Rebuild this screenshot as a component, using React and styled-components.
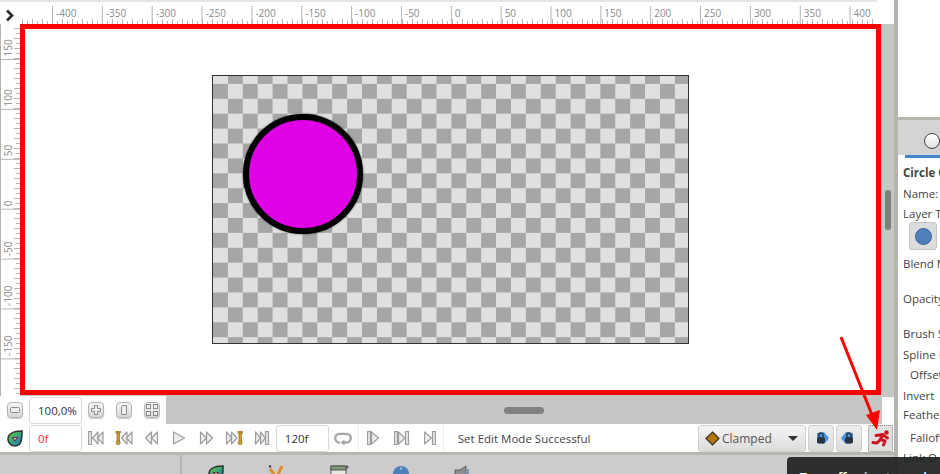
import React from "react";
import styled, { createGlobalStyle } from "styled-components";

const GlobalStyle = createGlobalStyle`
  html, body {
    margin: 0;
    padding: 0;
    overflow: hidden;
    background: #c6c7c5;
  }
`;

const Page = styled.div`
  position: relative;
  display: flex;
  width: 940px;
  height: 474px;
  overflow: hidden;
  font-family: "Open Sans", "Liberation Sans", sans-serif;
  font-size: 11.5px;
  color: #444;
`;
const Workspace = styled.div`
  display: flex;
  flex-direction: column;
  width: 894px;
  flex-shrink: 0;
  border-right: 4px solid #b4b5af;
`;
const RulerBar = styled.div`
  display: flex;
  height: 24px;
  background: #fff;
`;
const Corner = styled.div`
  width: 20px;
  height: 24px;
  flex-shrink: 0;
  border-top: 2px solid #e4e4e4;
  box-sizing: border-box;
`;
const RulerSvg = styled.svg`
  display: block;
  flex-shrink: 0;
  background: #fff;
`;
const MiddleRow = styled.div`
  display: flex;
  height: 372px;
`;
const CanvasFrame = styled.div`
  display: flex;
  align-items: center;
  justify-content: center;
  box-sizing: border-box;
  width: 861px;
  height: 371px;
  border: 5px solid #ff0000;
  background: #fff;
`;
const Board = styled.div`
  position: relative;
  box-sizing: border-box;
  width: 477px;
  height: 269px;
  border: 1px solid #333;
  background: conic-gradient(#a6a6a6 25%, #e0e0e0 0 50%, #a6a6a6 0 75%, #e0e0e0 0);
  background-size: 29.8px 29.8px;
  background-position: 0 -7px;
`;
const Disc = styled.div`
  position: absolute;
  left: 30px;
  top: 38px;
  box-sizing: border-box;
  width: 120px;
  height: 120px;
  border: 6px solid #000;
  border-radius: 50%;
  background: #df00e6;
  box-shadow: 0 0 2px 0 rgba(0, 0, 0, 0.8);
`;
const ScrollTrack = styled.div`
  flex: 1;
  padding: 166px 0 0 4px;
`;
const ScrollThumb = styled.div`
  width: 6px;
  height: 40px;
  border-radius: 3px;
  background: #7e8080;
`;
const ZoomRow = styled.div`
  display: flex;
  height: 28px;
`;
const ZoomTools = styled.div`
  display: flex;
  align-items: center;
  width: 166px;
  flex-shrink: 0;
  padding-left: 7px;
  box-sizing: border-box;
  background: #fff;
`;
const HandleArea = styled.div`
  flex: 1;
  display: flex;
  align-items: center;
`;
const HThumb = styled.div`
  width: 40px;
  height: 7px;
  margin-left: 338px;
  border-radius: 4px;
  background: #808181;
`;
const CornerBox = styled.div`
  align-self: flex-end;
  width: 12px;
  height: 27px;
  margin-left: auto;
  background: #fff;
`;
const SmallButton = styled.div`
  display: flex;
  align-items: center;
  justify-content: center;
  box-sizing: border-box;
  width: 16px;
  height: 16px;
  margin-left: ${(p) => p.$before || 0}px;
  margin-right: ${(p) => p.$gap}px;
  border: 1px solid #b4b4b4;
  border-radius: 4px;
  background: linear-gradient(#f6f6f6, #d6d6d6);
  box-shadow: 0 1px 1px rgba(0, 0, 0, 0.2);
`;
const Field = styled.div`
  display: flex;
  align-items: center;
  box-sizing: border-box;
  width: 53px;
  height: 27px;
  padding-left: ${(p) => p.$pad}px;
  border: 1px solid #d8d8d8;
  border-radius: 3px;
  background: #fff;
  color: ${(p) => p.$color || "#333"};
  white-space: nowrap;
  overflow: hidden;
  flex-shrink: 0;
`;
const TransportRow = styled.div`
  display: flex;
  align-items: center;
  height: 28px;
  padding-left: 7px;
  background: #fff;
`;
const LeafSlot = styled.div`
  width: 22px;
  flex-shrink: 0;
  display: flex;
`;
const PlayerButton = styled.div`
  display: flex;
  align-items: center;
  justify-content: center;
  width: ${(p) => p.$w}px;
  height: 28px;
  flex-shrink: 0;
`;
const Divider = styled.div`
  width: 1px;
  height: 28px;
  background: #ececec;
  flex-shrink: 0;
`;
const Status = styled.div`
  flex: 1;
  padding-left: 14px;
  color: #444;
  white-space: nowrap;
`;
const Select = styled.div`
  display: flex;
  align-items: center;
  box-sizing: border-box;
  width: 108px;
  height: 27px;
  padding: 0 6px 0 6px;
  border: 1px solid #d0d0d0;
  border-radius: 3px;
  background: linear-gradient(#f5f5f5, #dcdcdc);
  font-size: 12px;
  color: #555;
  gap: 2px;
`;
const Caret = styled.div`
  margin-left: auto;
  margin-right: 1px;
  border-left: 5px solid transparent;
  border-right: 5px solid transparent;
  border-top: 5px solid #333;
`;
const LockButton = styled.div`
  display: flex;
  align-items: center;
  justify-content: center;
  box-sizing: border-box;
  width: 26px;
  height: 27px;
  margin-left: 2px;
  border: 1px solid #d0d0d0;
  border-radius: 3px;
  background: linear-gradient(#efefef, #dadada);
`;
const AnimateButton = styled.div`
  display: flex;
  align-items: center;
  justify-content: center;
  box-sizing: border-box;
  width: 25px;
  height: 27px;
  margin-left: 6px;
  margin-right: 1px;
  border: 1px dotted #888;
  border-radius: 2px;
  background: #e0e0e0;
`;
const Dock = styled.div`
  flex: 1;
  display: flex;
  overflow: hidden;
  border-top: 3px solid #b6b7b1;
  background: #cccccc;
`;
const DockLeft = styled.div`
  width: 180px;
  flex-shrink: 0;
  border-right: 2px solid #b6b7b1;
`;
const DockIcons = styled.div`
  display: flex;
  gap: 43px;
  padding: 10px 0 0 26px;
`;
const Panel = styled.div`
  flex: 1;
  min-width: 0;
  display: flex;
  flex-direction: column;
  background: #fff;
  overflow: hidden;
`;
const PanelTop = styled.div`
  height: 117px;
  flex-shrink: 0;
  background: #fff;
`;
const TabBand = styled.div`
  height: 38px;
  flex-shrink: 0;
  box-sizing: border-box;
  padding: 13px 0 0 26px;
  border-top: 3px solid #b6b7b1;
  background: #d4d4d3;
`;
const TabDot = styled.div`
  box-sizing: border-box;
  width: 16px;
  height: 16px;
  border: 1px solid #444;
  border-radius: 50%;
  background: linear-gradient(#fff, #e0e0e0);
`;
const TabLine = styled.div`
  height: 3px;
  margin-left: 7px;
  flex-shrink: 0;
  background: #3f86cc;
`;
const Params = styled.div`
  display: flex;
  flex-direction: column;
  padding-left: 5px;
`;
const Param = styled.div`
  height: ${(p) => p.$h}px;
  line-height: 20px;
  padding-top: ${(p) => p.$top || 0}px;
  padding-left: ${(p) => (p.$indent ? 7 : 0)}px;
  font-weight: ${(p) => (p.$bold ? 700 : 400)};
  color: #444;
  white-space: nowrap;
  flex-shrink: 0;
`;
const LayerButton = styled.div`
  display: flex;
  align-items: center;
  justify-content: center;
  box-sizing: border-box;
  width: 28px;
  height: 28px;
  margin: 0 0 4px 6px;
  border: 1px solid #c4c4c4;
  border-radius: 3px;
  background: #dcdcdc;
  flex-shrink: 0;
`;
const LayerDot = styled.div`
  width: 17px;
  height: 17px;
  border-radius: 50%;
  background: #4f7fbb;
  border: 1px solid #3a6396;
  box-sizing: border-box;
`;
const Tooltip = styled.div`
  position: absolute;
  left: 787px;
  top: 457px;
  width: 160px;
  height: 30px;
  padding: 13px 0 0 13px;
  border-radius: 4px 0 0 0;
  background: rgba(32, 34, 34, 0.93);
  color: #fff;
  font-size: 12px;
  font-weight: 600;
  line-height: 16px;
  white-space: nowrap;
`;
const Arrow = styled.svg`
  position: absolute;
  left: 830px;
  top: 330px;
`;

const topLabels = [-400, -350, -300, -250, -200, -150, -100, -50, 0, 50, 100, 150, 200, 250, 300, 350, 400];
const sideLabels = [150, 100, 50, 0, -50, -100, -150];

const TopRuler = () => {
  const ticks = [];
  for (let x = 2; x < 857; x += 5) {
    const tall = Math.round((x - 2) / 5) % 2 === 0;
    ticks.push(<line key={x} x1={x + 0.5} x2={x + 0.5} y1={tall ? 19 : 21} y2={24} stroke="#b5b5b5" />);
  }
  return (
    <RulerSvg width="857" height="24">
      <rect width="857" height="2" fill="#e4e4e4" />
      {ticks}
      {topLabels.map((v) => {
        const x = 32 + ((v + 400) / 50) * 49.85;
        return (
          <g key={v}>
            <line x1={x + 0.5} x2={x + 0.5} y1="6" y2="24" stroke="#b5b5b5" />
            <text x={x + 4} y="17" fontSize="10" fill="#8c8c8c" fontFamily="Open Sans, sans-serif">
              {v}
            </text>
          </g>
        );
      })}
    </RulerSvg>
  );
};

const SideRuler = () => {
  const ticks = [];
  for (let y = 4; y < 372; y += 5) {
    const tall = Math.round((y - 4) / 5) % 2 === 0;
    ticks.push(<line key={y} x1={tall ? 14 : 16} x2="20" y1={y + 0.5} y2={y + 0.5} stroke="#b5b5b5" />);
  }
  return (
    <RulerSvg width="20" height="372">
      <rect width="1" height="372" fill="#b4b5af" />
      {ticks}
      {sideLabels.map((v) => {
        const y = 35.5 + ((150 - v) / 50) * 49.9;
        return (
          <g key={v}>
            <line x1="0" x2="20" y1={y} y2={y} stroke="#b5b5b5" />
            <text
              transform={`translate(12 ${y - 3}) rotate(-90)`}
              fontSize="10"
              fill="#8c8c8c"
              fontFamily="Open Sans, sans-serif"
            >
              {v}
            </text>
          </g>
        );
      })}
    </RulerSvg>
  );
};

const Chevron = () => (
  <svg width="20" height="22">
    <path d="M7 8.5 L12 13.5 L7 18.5" fill="none" stroke="#2c2c2c" strokeWidth="2.6" />
  </svg>
);

const Leaf = ({ id = "leaf" }) => (
  <svg width="16" height="17" viewBox="0 0 16 17">
    <defs>
      <linearGradient id={id} x1="0" y1="0" x2="1" y2="1">
        <stop offset="0" stopColor="#7cc73a" />
        <stop offset="0.5" stopColor="#35a878" />
        <stop offset="1" stopColor="#2f62c4" />
      </linearGradient>
    </defs>
    <path d="M15 1 C15 8 15 16 8 16 C4 16 1 13 1 9 C1 4 6 1 15 1 Z" fill={`url(#${id})`} stroke="#2c3632" strokeWidth="1.6" />
    <path d="M5.5 7.5 H10.5 L8 11 Z" fill="#d8e84a" stroke="#6a2f70" strokeWidth="1.1" />
  </svg>
);

const tri = (x, w, left) =>
  left ? `${x + w},1 ${x + w},13 ${x},7` : `${x},1 ${x},13 ${x + w},7`;

const PlayerGlyph = ({ w = 16, bars = [], tris = [], keyAt }) => (
  <svg width={w} height="14" viewBox={`0 0 ${w} 14`}>
    {bars.map((x) => (
      <rect key={x} x={x + 0.5} y="0.5" width="3" height="13" fill="#e6e6e6" stroke="#9e9e9e" strokeWidth="1.2" />
    ))}
    {tris.map(([x, tw, left]) => (
      <polygon key={x} points={tri(x + 0.5, tw, left)} fill="#ececec" stroke="#9e9e9e" strokeWidth="1.2" strokeLinejoin="round" />
    ))}
    {keyAt !== undefined && (
      <g fill="#d0a030" stroke="#8d6c1c" strokeWidth="0.7">
        <rect x={keyAt} y="0.5" width="2.4" height="11" />
        <circle cx={keyAt + 1.2} cy="11.8" r="2" />
        <rect x={keyAt - 1} y="0" width="4.4" height="2" />
      </g>
    )}
  </svg>
);

const LoopGlyph = () => (
  <svg width="18" height="15" viewBox="0 0 18 15">
    <path
      d="M6 11.5 H5.5 a4.3 4.3 0 0 1 0 -8.6 H12.5 a4.3 4.3 0 0 1 0 8.6 H10"
      fill="none"
      stroke="#a6a6a6"
      strokeWidth="2.4"
    />
    <path d="M10.5 8.5 L6.5 11.5 L10.5 14.5 Z" fill="#a6a6a6" />
  </svg>
);

const Diamond = () => (
  <svg width="15" height="15" viewBox="0 0 15 15">
    <polygon points="7.5,1 14,7.5 7.5,14 1,7.5" fill="#b77808" stroke="#33302a" strokeWidth="1.2" />
  </svg>
);

const Lock = ({ flip }) => (
  <svg width="18" height="16" viewBox="0 0 18 16">
    <polygon
      points={flip ? "1,8 6,2 13,3 13,13 6,14 3,11" : "17,8 12,2 5,3 5,13 12,14 15,11"}
      fill="#4a92e0"
    />
    <path d="M6.8 7 V5.2 a2.2 2.2 0 0 1 4.4 0 V7" fill="none" stroke="#2b3340" strokeWidth="1.4" />
    <rect x="5" y="7" width="8" height="6.5" rx="2" fill="#2b3340" />
  </svg>
);

const Runner = () => (
  <svg width="19" height="17" viewBox="0 0 19 17">
    <g fill="none" stroke="#cc1420" strokeWidth="3" strokeLinecap="round" strokeLinejoin="round">
      <path d="M5 5.5 L12 4.5 L9.5 9.5 L14 11 L12.5 15" />
      <path d="M9.5 9.5 L6 13 L2 12.5" />
      <path d="M12 5 L16.5 8" />
    </g>
    <circle cx="15.5" cy="2.5" r="2.2" fill="#cc1420" />
  </svg>
);

const DockBrush = () => (
  <svg width="20" height="20" viewBox="0 0 20 20">
    <circle cx="3" cy="1.5" r="1.2" fill="#3a3a3a" />
    <path d="M3 4 L9 12 M15 1 L10 12" stroke="#e48a1f" strokeWidth="3" fill="none" />
  </svg>
);

const DockWindow = () => (
  <svg width="20" height="20" viewBox="0 0 20 20">
    <rect x="1" y="1" width="15" height="14" rx="1" fill="#e8e8e0" stroke="#555" />
    <rect x="1" y="1" width="15" height="4" fill="#7f9a77" stroke="#555" />
    <circle cx="17" cy="2" r="1.5" fill="#555" />
  </svg>
);

const DockBall = () => (
  <svg width="18" height="20" viewBox="0 0 18 20">
    <circle cx="8" cy="9" r="8" fill="#4f7fbb" />
    <circle cx="8" cy="3.5" r="1.2" fill="#9db9dc" />
  </svg>
);

const DockSpeaker = () => (
  <svg width="20" height="20" viewBox="0 0 20 20">
    <polygon points="1,5 6,5 12,1 12,16 6,12 1,12" fill="#8a8f92" stroke="#5c6063" />
    <path d="M14 4 V13" stroke="#6f9ac8" strokeWidth="2" />
  </svg>
);

const ZoomGlyph = ({ kind }) => (
  <svg width="12" height="12" viewBox="0 0 12 12">
    {kind === "minus" && <rect x="1.5" y="3.5" width="9" height="5" rx="1" fill="#eee" stroke="#8c8c8c" />}
    {kind === "plus" && (
      <path d="M4.5 1.5 H7.5 V4.5 H10.5 V7.5 H7.5 V10.5 H4.5 V7.5 H1.5 V4.5 H4.5 Z" fill="#eee" stroke="#8c8c8c" />
    )}
    {kind === "one" && <path d="M4.5 1.5 H8.5 V10.5 H3.5 V3.5 Z" fill="#eee" stroke="#8c8c8c" />}
    {kind === "fit" && (
      <g fill="#eee" stroke="#8c8c8c">
        <rect x="0.5" y="0.5" width="4" height="4" />
        <rect x="7.5" y="0.5" width="4" height="4" />
        <rect x="0.5" y="7.5" width="4" height="4" />
        <rect x="7.5" y="7.5" width="4" height="4" />
      </g>
    )}
  </svg>
);

const App = () => (
  <Page>
    <GlobalStyle />
    <Workspace>
      <RulerBar>
        <Corner>
          <Chevron />
        </Corner>
        <TopRuler />
      </RulerBar>
      <MiddleRow>
        <SideRuler />
        <CanvasFrame>
          <Board>
            <Disc />
          </Board>
        </CanvasFrame>
        <ScrollTrack>
          <ScrollThumb />
        </ScrollTrack>
      </MiddleRow>
      <ZoomRow>
        <ZoomTools>
          <SmallButton $gap={6}>
            <ZoomGlyph kind="minus" />
          </SmallButton>
          <Field $pad={8}>100,0%</Field>
          <SmallButton $before={6} $gap={12}>
            <ZoomGlyph kind="plus" />
          </SmallButton>
          <SmallButton $gap={12}>
            <ZoomGlyph kind="one" />
          </SmallButton>
          <SmallButton $gap={0}>
            <ZoomGlyph kind="fit" />
          </SmallButton>
        </ZoomTools>
        <HandleArea>
          <HThumb />
          <CornerBox />
        </HandleArea>
      </ZoomRow>
      <TransportRow>
        <LeafSlot>
          <Leaf />
        </LeafSlot>
        <Field $pad={8} $color="#f03030">
          0f
        </Field>
        <PlayerButton $w={27.7}>
          <PlayerGlyph bars={[0]} tris={[[4, 5.5, true], [9, 5.5, true]]} />
        </PlayerButton>
        <PlayerButton $w={27.7}>
          <PlayerGlyph w={18} keyAt={2} tris={[[6, 5.5, true], [11, 5.5, true]]} />
        </PlayerButton>
        <PlayerButton $w={27.7}>
          <PlayerGlyph tris={[[2, 6, true], [8, 6, true]]} />
        </PlayerButton>
        <PlayerButton $w={27.7}>
          <PlayerGlyph tris={[[2, 11, false]]} />
        </PlayerButton>
        <PlayerButton $w={27.7}>
          <PlayerGlyph tris={[[1, 6, false], [7, 6, false]]} />
        </PlayerButton>
        <PlayerButton $w={27.7}>
          <PlayerGlyph w={18} keyAt={14} tris={[[1, 5.5, false], [6, 5.5, false]]} />
        </PlayerButton>
        <PlayerButton $w={27.7}>
          <PlayerGlyph bars={[11]} tris={[[1, 5, false], [6, 5, false]]} />
        </PlayerButton>
        <Field $pad={8}>120f</Field>
        <PlayerButton $w={29}>
          <LoopGlyph />
        </PlayerButton>
        <Divider />
        <PlayerButton $w={28}>
          <PlayerGlyph w={12} bars={[0]} tris={[[4, 7, false]]} />
        </PlayerButton>
        <PlayerButton $w={30}>
          <PlayerGlyph bars={[0, 11]} tris={[[4, 6.5, false]]} />
        </PlayerButton>
        <PlayerButton $w={26}>
          <PlayerGlyph w={12} bars={[8]} tris={[[0, 7, false]]} />
        </PlayerButton>
        <Divider />
        <Status>Set Edit Mode Successful</Status>
        <Select>
          <Diamond />
          Clamped
          <Caret />
        </Select>
        <LockButton>
          <Lock />
        </LockButton>
        <LockButton>
          <Lock flip />
        </LockButton>
        <AnimateButton>
          <Runner />
        </AnimateButton>
      </TransportRow>
      <Dock>
        <DockLeft />
        <DockIcons>
          <Leaf id="dockleaf" />
          <DockBrush />
          <DockWindow />
          <DockBall />
          <DockSpeaker />
        </DockIcons>
      </Dock>
    </Workspace>
    <Panel>
      <PanelTop />
      <TabBand>
        <TabDot />
      </TabBand>
      <TabLine />
      <Params>
        <Param $bold $h={21} $top={5}>
          Circle C
        </Param>
        <Param $h={20}>Name:</Param>
        <Param $h={18}>Layer T</Param>
        <LayerButton>
          <LayerDot />
        </LayerButton>
        <Param $h={35}>Blend M</Param>
        <Param $h={35}>Opacity</Param>
        <Param $h={21}>Brush S</Param>
        <Param $h={20}>Spline I</Param>
        <Param $indent $h={21}>
          Offset
        </Param>
        <Param $h={19}>Invert</Param>
        <Param $h={23}>Feather</Param>
        <Param $indent $h={20}>
          Falloff
        </Param>
        <Param $h={20}>Link O</Param>
      </Params>
    </Panel>
    <Tooltip>Turn off animate mode</Tooltip>
    <Arrow width="60" height="110" viewBox="0 0 60 110">
      <line x1="11" y1="7" x2="44" y2="90" stroke="#ff0000" strokeWidth="3" />
      <polygon points="47,100 36,85 50,80" fill="#ff0000" />
    </Arrow>
  </Page>
);

export default App;
